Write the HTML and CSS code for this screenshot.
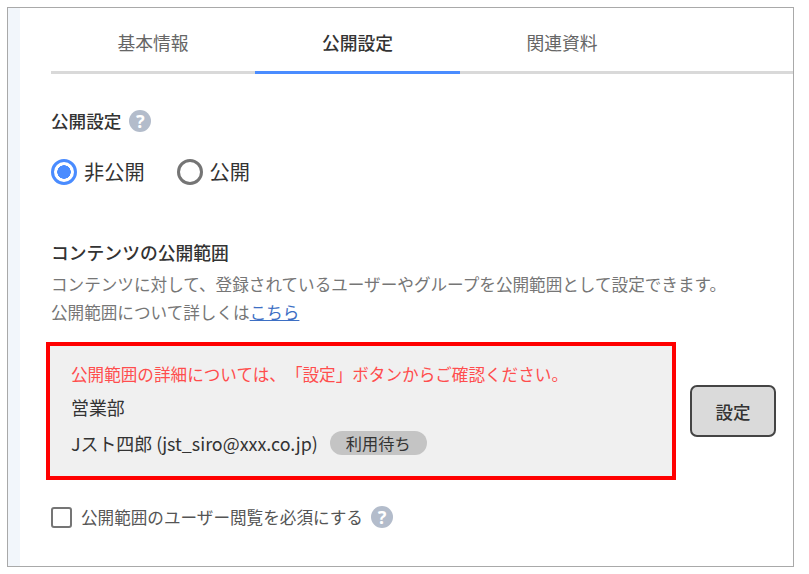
FILE: index.html
```html
<!DOCTYPE html>
<html lang="ja">
<head>
<meta charset="utf-8">
<title>公開設定</title>
<link rel="stylesheet" href="styles.css">
</head>
<body>
<div class="frame">
  <div class="strip"></div>
  <main class="main">
    <nav class="tabs">
      <div class="tab">基本情報</div>
      <div class="tab active">公開設定</div>
      <div class="tab">関連資料</div>
    </nav>
    <div class="heading-row">
      <h2 class="heading">公開設定</h2>
      <span class="help">?</span>
    </div>
    <div class="radios">
      <label class="radio"><span class="radio-dot on"></span>非公開</label>
      <label class="radio"><span class="radio-dot"></span>公開</label>
    </div>
    <h2 class="scope-title">コンテンツの公開範囲</h2>
    <p class="desc">コンテンツに対して、登録されているユーザーやグループを公開範囲として設定できます。</p>
    <p class="desc">公開範囲について詳しくは<a class="link" href="#">こちら</a></p>
    <div class="scope-row">
      <div class="scope-box">
        <p class="notice">公開範囲の詳細については、「設定」ボタンからご確認ください。</p>
        <p class="entry">営業部</p>
        <p class="entry user">Jスト四郎 (jst_siro@xxx.co.jp)<span class="badge">利用待ち</span></p>
      </div>
      <button class="set-btn">設定</button>
    </div>
    <div class="check-row">
      <span class="checkbox"></span>
      <span class="check-label">公開範囲のユーザー閲覧を必須にする</span>
      <span class="help">?</span>
    </div>
  </main>
</div>
</body>
</html>
```
FILE: styles.css
```css
* { box-sizing: border-box; }
html, body { margin: 0; padding: 0; background: #fff; }
body {
  width: 809px;
  height: 574px;
  overflow: hidden;
  padding: 7px 15px 7px 7px;
  font-family: "Noto Sans CJK JP", "Noto Sans", sans-serif;
  color: #333;
  text-spacing-trim: space-all;
}
.frame {
  display: flex;
  width: 787px;
  height: 560px;
  border: 1px solid #a9a9a9;
}
.strip { width: 12px; flex: none; background: #f2f6fb; }
.main { flex: 1; min-width: 0; padding-left: 31px; }
.tabs {
  display: flex;
  height: 66px;
  border-bottom: 3px solid #d9d9d9;
}
.tab {
  width: 204px;
  height: 66px;
  padding-top: 21px;
  text-align: center;
  font-size: 17.8px;
  line-height: 26px;
  color: #666;
}
.tab.active {
  width: 205px;
  color: #333;
  font-weight: 500;
  border-bottom: 3px solid #4a8cff;
}
.heading-row {
  display: flex;
  align-items: center;
  gap: 8px;
  margin-top: 34px;
  height: 26px;
}
.heading, .scope-title {
  margin: 0;
  font-size: 17.6px;
  font-weight: 500;
  line-height: 26px;
  color: #333;
}
.scope-title { font-size: 17.8px; }
.help {
  display: flex;
  align-items: center;
  justify-content: center;
  width: 22px;
  height: 22px;
  flex: none;
  border-radius: 50%;
  background: #b3bccb;
  color: #fff;
  font-family: "Noto Sans", sans-serif;
  font-size: 18px;
  font-weight: 700;
  line-height: 22px;
}
.radios {
  display: flex;
  gap: 32px;
  margin-top: 25px;
  height: 26px;
}
.radio {
  display: flex;
  align-items: center;
  gap: 7px;
  font-size: 20.2px;
  line-height: 26px;
}
.radio-dot {
  width: 26px;
  height: 26px;
  flex: none;
  border: 3px solid #757575;
  border-radius: 50%;
  background: #fff;
}
.radio-dot.on {
  border-color: #4a8cff;
  background: radial-gradient(circle, #4a8cff 0 6.5px, #fff 7px);
}
.scope-title { margin-top: 54px; }
.desc {
  margin: 0;
  font-size: 16.6px;
  line-height: 28px;
  color: #767676;
}
.desc:first-of-type { margin-top: 5px; }
.link { color: #3d6fc4; text-decoration: underline; }
.scope-row {
  display: flex;
  align-items: center;
  gap: 14px;
  margin-top: 16px;
  margin-left: -5px;
}
.scope-box {
  width: 630px;
  height: 138px;
  padding: 14px 21px 0;
  background: #f0f0f0;
  border: 4px solid #ff0000;
}
.notice {
  margin: 0;
  font-size: 16.6px;
  line-height: 28px;
  color: #ff4d4d;
}
.entry {
  margin: 0;
  font-size: 17.9px;
  line-height: 28px;
  color: #333;
}
.notice + .entry { margin-top: 5px; }
.user {
  display: flex;
  align-items: center;
  margin-top: 8px;
}
.badge {
  margin-left: 12px;
  padding: 0 16px;
  height: 24px;
  line-height: 24px;
  border-radius: 12px;
  background: #c4c4c4;
  font-size: 16.2px;
}
.set-btn {
  width: 86px;
  height: 52px;
  padding: 0;
  font: 500 17.5px "Noto Sans CJK JP", sans-serif;
  color: #333;
  background: #dadada;
  border: 2px solid #444;
  border-radius: 7px;
}
.check-row {
  display: flex;
  align-items: center;
  margin-top: 25px;
  height: 24px;
}
.checkbox {
  width: 21px;
  height: 21px;
  flex: none;
  border: 2.5px solid #757575;
  border-radius: 3px;
}
.check-label {
  margin-left: 9px;
  margin-right: 8px;
  font-size: 16.6px;
  line-height: 24px;
  color: #555;
}
```
